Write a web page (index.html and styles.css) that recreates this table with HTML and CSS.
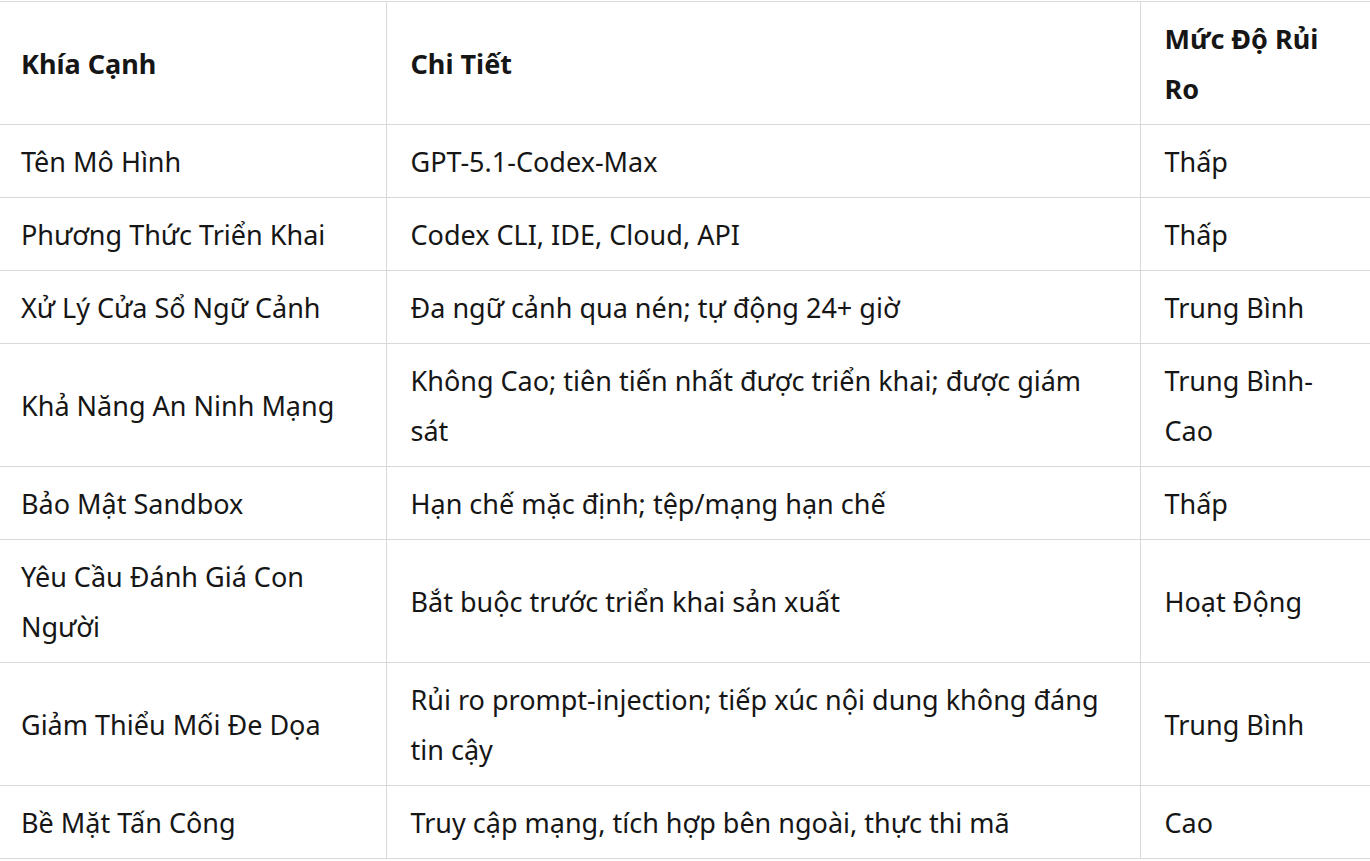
FILE: index.html
```html
<!DOCTYPE html>
<html lang="vi">
<head>
<meta charset="utf-8">
<link rel="stylesheet" href="styles.css">
</head>
<body>
<table class="risk">
  <colgroup>
    <col class="c1"><col class="c2"><col class="c3">
  </colgroup>
  <thead>
    <tr><th>Khía Cạnh</th><th>Chi Tiết</th><th>Mức Độ Rủi Ro</th></tr>
  </thead>
  <tbody>
    <tr><td>Tên Mô Hình</td><td>GPT-5.1-Codex-Max</td><td>Thấp</td></tr>
    <tr><td>Phương Thức Triển Khai</td><td>Codex CLI, IDE, Cloud, API</td><td>Thấp</td></tr>
    <tr><td>Xử Lý Cửa Sổ Ngữ Cảnh</td><td>Đa ngữ cảnh qua nén; tự động 24+ giờ</td><td>Trung Bình</td></tr>
    <tr><td>Khả Năng An Ninh Mạng</td><td>Không Cao; tiên tiến nhất được triển khai; được giám sát</td><td>Trung Bình-Cao</td></tr>
    <tr><td>Bảo Mật Sandbox</td><td>Hạn chế mặc định; tệp/mạng hạn chế</td><td>Thấp</td></tr>
    <tr><td>Yêu Cầu Đánh Giá Con Người</td><td>Bắt buộc trước triển khai sản xuất</td><td>Hoạt Động</td></tr>
    <tr><td>Giảm Thiểu Mối Đe Dọa</td><td>Rủi ro prompt-injection; tiếp xúc nội dung không đáng tin cậy</td><td>Trung Bình</td></tr>
    <tr><td>Bề Mặt Tấn Công</td><td>Truy cập mạng, tích hợp bên ngoài, thực thi mã</td><td>Cao</td></tr>
  </tbody>
</table>
</body>
</html>
```

FILE: styles.css
```css
html, body {
  margin: 0;
  padding: 0;
  background: #ffffff;
}
body {
  padding-top: 1px;
  font-family: "Noto Sans", "Open Sans", sans-serif;
  color: #161616;
}
.risk {
  border-collapse: collapse;
  table-layout: fixed;
  width: 1370px;
  font-size: 27px;
  line-height: 50px;
}
.c1 { width: 386px; }
.c2 { width: 754px; }
.c3 { width: 230px; }
.risk th,
.risk td {
  border: 1px solid #d9d9d9;
  padding: 12px 24px 10px;
  text-align: left;
  vertical-align: middle;
}
.risk th {
  font-weight: 700;
}
.risk tr > :first-child {
  border-left: none;
  padding-left: 21px;
}
.risk tr > :last-child { border-right: none; }
```
